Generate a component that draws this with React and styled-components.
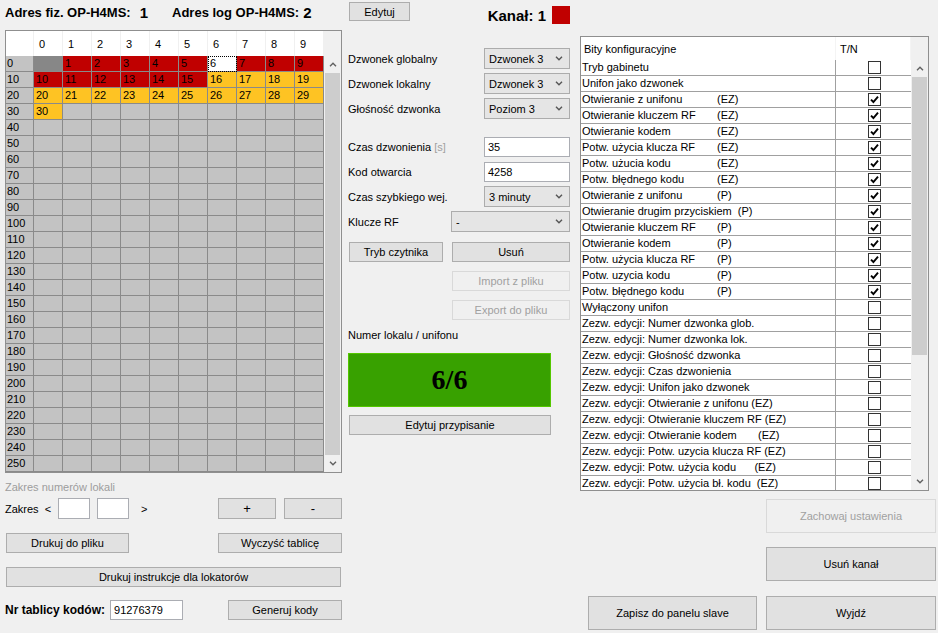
import React from "react";
import styled, { createGlobalStyle } from "styled-components";

const GlobalStyle = createGlobalStyle`
  html, body { margin: 0; padding: 0; background: #f0f0f0; }
  body {
    font-family: "Liberation Sans", Arial, sans-serif;
    font-size: 11px;
    color: #000;
  }
  * { box-sizing: border-box; }
`;

const Window = styled.div`
  width: 938px;
  height: 633px;
  display: flex;
  padding-left: 5px;
  background: #f0f0f0;
  overflow: hidden;
`;

/* ---------- shared controls ---------- */

const Button = styled.button`
  width: ${(p) => p.$w}px;
  height: ${(p) => p.$h || 20}px;
  margin-left: ${(p) => p.$ml || 0}px;
  padding: 0;
  font-family: "Liberation Sans", Arial, sans-serif;
  font-size: ${(p) => p.$fs || 11}px;
  color: #000;
  background: #e1e1e1;
  border: 1px solid #adadad;
  flex-shrink: 0;

  &:disabled {
    color: #a0a0a0;
    background: #f0f0f0;
    border-color: #d9d9d9;
  }
`;

const TextBox = styled.div`
  width: ${(p) => p.$w}px;
  height: ${(p) => p.$h || 20}px;
  margin-left: ${(p) => p.$ml || 0}px;
  border: 1px solid #abadb3;
  background: #fff;
  padding-left: 3px;
  display: flex;
  align-items: center;
  flex-shrink: 0;
`;

const SelectBox = styled.div`
  width: ${(p) => p.$w}px;
  height: 21px;
  border: 1px solid #acacac;
  background: #e5e5e5;
  display: flex;
  align-items: center;
  justify-content: space-between;
  padding: 0 6px 0 4px;
  flex-shrink: 0;
`;

const Chevron = ({ up, color = "#555" }) => (
  <svg width="8" height="5" viewBox="0 0 8 5">
    <polyline
      points={up ? "1,4.2 4,1.2 7,4.2" : "1,0.8 4,3.8 7,0.8"}
      fill="none"
      stroke={color}
      strokeWidth="1.4"
    />
  </svg>
);

const Select = ({ w, children }) => (
  <SelectBox $w={w}>
    <span>{children}</span>
    <Chevron />
  </SelectBox>
);

const ScrollTrack = styled.div`
  grid-column: ${(p) => p.$col || "auto"};
  grid-row: ${(p) => p.$row || "auto"};
  display: flex;
  flex-direction: column;
  background: #f0f0f0;
  height: 100%;
`;

const ScrollArrow = styled.div`
  height: 17px;
  display: flex;
  align-items: center;
  justify-content: center;
  flex-shrink: 0;
`;

const ScrollThumb = styled.div`
  margin: 0 1px;
  background: #cdcdcd;
  flex: ${(p) => (p.$h ? `0 0 ${p.$h}px` : "1")};
`;

const ScrollRest = styled.div`
  flex: 1;
`;

const Scrollbar = ({ thumb, col, row }) => (
  <ScrollTrack $col={col} $row={row}>
    <ScrollArrow>
      <Chevron up color="#606060" />
    </ScrollArrow>
    <ScrollThumb $h={thumb} />
    {thumb ? <ScrollRest /> : null}
    <ScrollArrow>
      <Chevron color="#606060" />
    </ScrollArrow>
  </ScrollTrack>
);

/* ---------- left column ---------- */

const LeftColumn = styled.div`
  width: 337px;
  display: flex;
  flex-direction: column;
`;

const HeaderLine = styled.div`
  height: 24px;
  margin-bottom: 6px;
  display: flex;
  align-items: center;
`;

const BoldTitle = styled.span`
  font-weight: bold;
  font-size: ${(p) => p.$fs || 13}px;
  margin-left: ${(p) => p.$ml || 0}px;
  white-space: nowrap;
`;

const GridBox = styled.div`
  width: 337px;
  border: 1px solid #8f8f8f;
  display: grid;
  grid-template-columns: 28px repeat(10, 29px) 17px;
  grid-template-rows: 25px repeat(26, 16px);
  background: #f0f0f0;
`;

const HeadCell = styled.div`
  background: #fff;
  border-right: 1px solid #f0f0f0;
  padding-left: 5px;
  display: flex;
  align-items: center;
`;

const CELL_BG = {
  gray: "#c3c3c3",
  dark: "#878787",
  red: "#c00000",
  yellow: "#fec323",
  focus: "#ffffff",
};

const Cell = styled.div`
  background: ${(p) => CELL_BG[p.$kind]};
  border-right: 1px solid #8a8a8a;
  border-bottom: 1px solid #8a8a8a;
  padding-left: ${(p) => (p.$rowHead ? 1 : 2)}px;
  line-height: 15px;
  white-space: nowrap;
  overflow: hidden;
  ${(p) =>
    p.$kind === "focus" &&
    "outline: 1px dotted #000; outline-offset: -1px;"}
`;

const HintText = styled.div`
  margin-top: 7px;
  line-height: 14px;
  color: #9d9d9d;
`;

const ControlRow = styled.div`
  margin-top: ${(p) => p.$mt}px;
  height: ${(p) => p.$h || 20}px;
  display: flex;
  align-items: center;
  justify-content: ${(p) => p.$justify || "flex-start"};
  padding-left: ${(p) => p.$pl || 0}px;
`;

const Glyph = styled.span`
  margin-left: ${(p) => p.$ml || 0}px;
`;

const Spacer = styled.div`
  flex: 1;
`;

function cellKind(n) {
  if (n === 0) return "dark";
  if (n === 6) return "focus";
  if (n <= 15) return "red";
  if (n <= 30) return "yellow";
  return "gray";
}

const NumberGrid = () => {
  const rows = Array.from({ length: 26 }, (_, i) => i * 10);
  const cols = Array.from({ length: 10 }, (_, i) => i);
  return (
    <GridBox>
      <HeadCell />
      {cols.map((c) => (
        <HeadCell key={"h" + c}>{c}</HeadCell>
      ))}
      <div />
      <Scrollbar col="12" row="2 / span 26" />
      {rows.map((r) => (
        <React.Fragment key={r}>
          <Cell $kind="gray" $rowHead>
            {r}
          </Cell>
          {cols.map((c) => {
            const n = r + c;
            const kind = cellKind(n);
            return (
              <Cell key={c} $kind={kind}>
                {n > 0 && n <= 30 ? n : ""}
              </Cell>
            );
          })}
        </React.Fragment>
      ))}
    </GridBox>
  );
};

/* ---------- middle column ---------- */

const MiddleColumn = styled.div`
  width: 222px;
  margin-left: 6px;
  display: flex;
  flex-direction: column;
`;

const MiddleHeader = styled.div`
  height: 46px;
  display: flex;
  justify-content: space-between;
  align-items: flex-start;
  padding-left: 1px;
  padding-top: 2px;
`;

const ChannelTag = styled.div`
  display: flex;
  align-items: center;
  margin-top: 4px;
  gap: 6px;
`;

const ChannelSwatch = styled.div`
  width: 18px;
  height: 18px;
  background: #c00000;
`;

const FormRow = styled.div`
  height: 25px;
  display: flex;
  align-items: center;
  margin-top: ${(p) => p.$mt || 0}px;
`;

const FieldLabel = styled.span`
  flex: 1;
  white-space: nowrap;
`;

const Unit = styled.span`
  color: #a0a0a0;
`;

const CaptionText = styled.div`
  margin-top: 8px;
  line-height: 14px;
`;

const NumberDisplay = styled.div`
  margin-top: 11px;
  width: 203px;
  height: 54px;
  background: #38a100;
  border: 1px solid #54c700;
  display: flex;
  align-items: center;
  justify-content: center;
  font-family: "Liberation Serif", "Times New Roman", serif;
  font-weight: bold;
  font-size: 28px;
`;

/* ---------- right column ---------- */

const RightColumn = styled.div`
  width: 356px;
  margin-left: 10px;
  padding-top: 36px;
  display: flex;
  flex-direction: column;
  align-items: flex-end;
`;

const ConfigTable = styled.div`
  align-self: flex-start;
  width: 349px;
  border: 1px solid #8f8f8f;
  display: grid;
  grid-template-columns: 255px 75px 17px;
  grid-template-rows: 23px 430px;
`;

const TableHead = styled.div`
  background: #fff;
  padding-left: ${(p) => p.$pl}px;
  display: flex;
  align-items: center;
  border-right: 1px solid #f4f4f4;
`;

const TableBody = styled.div`
  grid-column: 1 / span 2;
  overflow: hidden;
  background: #fff;
`;

const TableRow = styled.div`
  display: grid;
  grid-template-columns: 255px 75px;
  height: 16px;
  border-bottom: 1px solid #a0a0a0;
`;

const RowLabel = styled.div`
  border-right: 1px solid #a0a0a0;
  padding-left: 1px;
  line-height: 15px;
  white-space: pre;
  overflow: hidden;
`;

const LabelMain = styled.span`
  display: inline-block;
  min-width: ${(p) => (p.$tagged ? 135 : 0)}px;
  padding-right: ${(p) => (p.$tagged ? 6 : 0)}px;
`;

const RowCheck = styled.div`
  display: flex;
  align-items: center;
  justify-content: center;
  padding-left: 1px;
`;

const CheckBox = styled.div`
  width: 13px;
  height: 13px;
  border: 1px solid #333;
  background: #fff;
  display: flex;
  align-items: center;
  justify-content: center;
`;

const Check = ({ on }) => (
  <CheckBox>
    {on && (
      <svg width="11" height="11" viewBox="0 0 11 11">
        <polyline
          points="2,5.6 4.4,8 9,2.6"
          fill="none"
          stroke="#000"
          strokeWidth="1.9"
        />
      </svg>
    )}
  </CheckBox>
);

const ActionRow = styled.div`
  margin-top: ${(p) => p.$mt}px;
  display: flex;
  gap: 9px;
`;

const configBits = [
  ["Tryb gabinetu", "", false],
  ["Unifon jako dzwonek", "", false],
  ["Otwieranie z unifonu", "(EZ)", true],
  ["Otwieranie kluczem RF", "(EZ)", true],
  ["Otwieranie kodem", "(EZ)", true],
  ["Potw. użycia klucza RF", "(EZ)", true],
  ["Potw. użucia kodu", "(EZ)", true],
  ["Potw. błędnego kodu", "(EZ)", true],
  ["Otwieranie z unifonu", "(P)", true],
  ["Otwieranie drugim przyciskiem", "(P)", true],
  ["Otwieranie kluczem RF", "(P)", true],
  ["Otwieranie kodem", "(P)", true],
  ["Potw. użycia klucza RF", "(P)", true],
  ["Potw. uzycia kodu", "(P)", true],
  ["Potw. błędnego kodu", "(P)", true],
  ["Wyłączony unifon", "", false],
  ["Zezw. edycji: Numer dzwonka glob.", "", false],
  ["Zezw. edycji: Numer dzwonka lok.", "", false],
  ["Zezw. edycji: Głośność dzwonka", "", false],
  ["Zezw. edycji: Czas dzwonienia", "", false],
  ["Zezw. edycji: Unifon jako dzwonek", "", false],
  ["Zezw. edycji: Otwieranie z unifonu (EZ)", "", false],
  ["Zezw. edycji: Otwieranie kluczem RF (EZ)", "", false],
  ["Zezw. edycji: Otwieranie kodem       (EZ)", "", false],
  ["Zezw. edycji: Potw. uzycia klucza RF (EZ)", "", false],
  ["Zezw. edycji: Potw. użycia kodu      (EZ)", "", false],
  ["Zezw. edycji: Potw. użycia bł. kodu  (EZ)", "", false],
];

const App = () => {
  return (
    <>
      <GlobalStyle />
      <Window>
        <LeftColumn>
          <HeaderLine>
            <BoldTitle>Adres fiz. OP-H4MS:</BoldTitle>
            <BoldTitle $fs={15} $ml={9}>
              1
            </BoldTitle>
            <BoldTitle $ml={24}>Adres log OP-H4MS:</BoldTitle>
            <BoldTitle $fs={15} $ml={4}>
              2
            </BoldTitle>
          </HeaderLine>

          <NumberGrid />

          <HintText>Zakres numerów lokali</HintText>

          <ControlRow $mt={4} $h={21}>
            <span>Zakres</span>
            <Glyph $ml={6}>&lt;</Glyph>
            <TextBox $w={32} $h={21} $ml={7} />
            <TextBox $w={32} $h={21} $ml={7} />
            <Glyph $ml={12}>&gt;</Glyph>
            <Spacer />
            <Button $w={58} $h={21} $fs={13}>
              +
            </Button>
            <Button $w={58} $h={21} $ml={8} $fs={13}>
              -
            </Button>
          </ControlRow>

          <ControlRow $mt={14} $justify="space-between" $pl={1}>
            <Button $w={123}>Drukuj do pliku</Button>
            <Button $w={124}>Wyczyść tablicę</Button>
          </ControlRow>

          <ControlRow $mt={14} $pl={1}>
            <Button $w={335}>Drukuj instrukcje dla lokatorów</Button>
          </ControlRow>

          <ControlRow $mt={13}>
            <BoldTitle $fs={12}>Nr tablicy kodów:</BoldTitle>
            <TextBox $w={73} $ml={5}>
              91276379
            </TextBox>
            <Spacer />
            <Button $w={114}>Generuj kody</Button>
          </ControlRow>
        </LeftColumn>

        <MiddleColumn>
          <MiddleHeader>
            <Button $w={61} $h={19}>
              Edytuj
            </Button>
            <ChannelTag>
              <BoldTitle $fs={15}>Kanał: 1</BoldTitle>
              <ChannelSwatch />
            </ChannelTag>
          </MiddleHeader>

          <FormRow>
            <FieldLabel>Dzwonek globalny</FieldLabel>
            <Select w={86}>Dzwonek 3</Select>
          </FormRow>
          <FormRow>
            <FieldLabel>Dzwonek lokalny</FieldLabel>
            <Select w={86}>Dzwonek 3</Select>
          </FormRow>
          <FormRow>
            <FieldLabel>Głośność dzwonka</FieldLabel>
            <Select w={86}>Poziom 3</Select>
          </FormRow>

          <FormRow $mt={13}>
            <FieldLabel>
              Czas dzwonienia <Unit>[s]</Unit>
            </FieldLabel>
            <TextBox $w={86}>35</TextBox>
          </FormRow>
          <FormRow>
            <FieldLabel>Kod otwarcia</FieldLabel>
            <TextBox $w={86}>4258</TextBox>
          </FormRow>
          <FormRow>
            <FieldLabel>Czas szybkiego wej.</FieldLabel>
            <Select w={86}>3 minuty</Select>
          </FormRow>
          <FormRow>
            <FieldLabel>Klucze RF</FieldLabel>
            <Select w={119}>-</Select>
          </FormRow>

          <ControlRow $mt={8} $justify="space-between" $pl={1}>
            <Button $w={94}>Tryb czytnika</Button>
            <Button $w={118}>Usuń</Button>
          </ControlRow>
          <ControlRow $mt={9} $justify="flex-end">
            <Button $w={118} disabled>
              Import z pliku
            </Button>
          </ControlRow>
          <ControlRow $mt={9} $justify="flex-end">
            <Button $w={118} disabled>
              Export do pliku
            </Button>
          </ControlRow>

          <CaptionText>Numer lokalu / unifonu</CaptionText>
          <NumberDisplay>6/6</NumberDisplay>
          <ControlRow $mt={8} $pl={1}>
            <Button $w={202}>Edytuj przypisanie</Button>
          </ControlRow>
        </MiddleColumn>

        <RightColumn>
          <ConfigTable>
            <TableHead $pl={3}>Bity konfiguracyjne</TableHead>
            <TableHead $pl={4}>T/N</TableHead>
            <div />
            <TableBody>
              {configBits.map(([label, tag, on], i) => (
                <TableRow key={i}>
                  <RowLabel>
                    <LabelMain $tagged={!!tag}>{label}</LabelMain>
                    {tag}
                  </RowLabel>
                  <RowCheck>
                    <Check on={on} />
                  </RowCheck>
                </TableRow>
              ))}
            </TableBody>
            <Scrollbar thumb={278} />
          </ConfigTable>

          <ActionRow $mt={8}>
            <Button $w={170} $h={34} disabled>
              Zachowaj ustawienia
            </Button>
          </ActionRow>
          <ActionRow $mt={14}>
            <Button $w={170} $h={34}>
              Usuń kanał
            </Button>
          </ActionRow>
          <ActionRow $mt={15}>
            <Button $w={169} $h={34}>
              Zapisz do panelu slave
            </Button>
            <Button $w={170} $h={34}>
              Wyjdź
            </Button>
          </ActionRow>
        </RightColumn>
      </Window>
    </>
  );
};

export default App;
